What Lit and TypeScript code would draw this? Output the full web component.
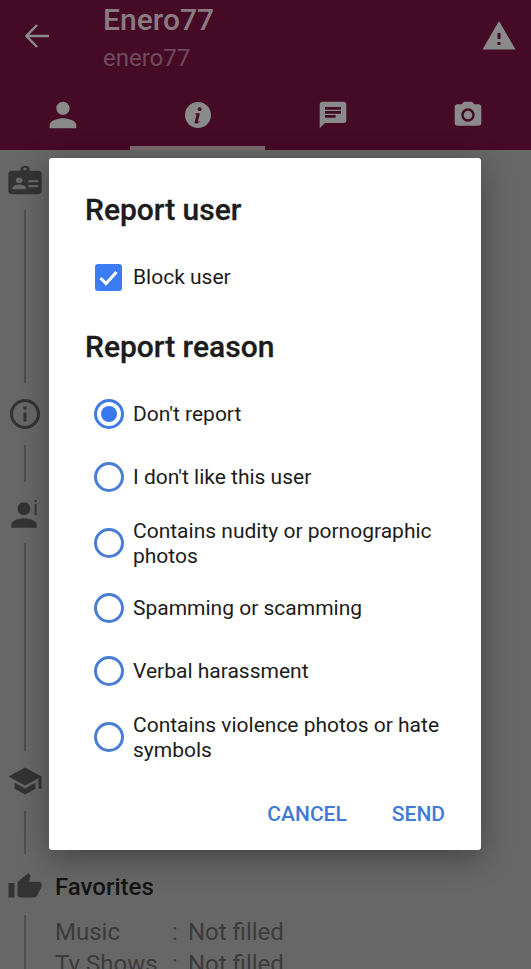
import { LitElement, html, css, svg } from "lit";
import { customElement } from "lit/decorators.js";
import { styleMap } from "lit/directives/style-map.js";

const P = {
  person: "M12 12c2.21 0 4-1.79 4-4s-1.79-4-4-4-4 1.79-4 4 1.79 4 4 4zm0 2c-2.67 0-8 1.34-8 4v2h16v-2c0-2.66-5.33-4-8-4z",
  chat: "M20 2H4c-1.1 0-1.99.9-1.99 2L2 22l4-4h14c1.1 0 2-.9 2-2V4c0-1.1-.9-2-2-2zM6 9h12v2H6V9zm8 5H6v-2h8v2zm4-6H6V6h12v2z",
  camera: "M9 2L7.17 4H4c-1.1 0-2 .9-2 2v12c0 1.1.9 2 2 2h16c1.1 0 2-.9 2-2V6c0-1.1-.9-2-2-2h-3.17L15 2H9zm3 15c-2.76 0-5-2.24-5-5s2.24-5 5-5 5 2.24 5 5-2.24 5-5 5zm0-8.200a3.200 3.200 0 1 0 0 6.400 3.200 3.200 0 0 0 0-6.400z",
  warning: "M1 21h22L12 2 1 21zm12-3h-2v-2h2v2zm0-4h-2v-4h2v4z",
  info: "M11 7h2v2h-2zm0 4h2v6h-2zm1-9C6.48 2 2 6.48 2 12s4.48 10 10 10 10-4.48 10-10S17.52 2 12 2zm0 18c-4.41 0-8-3.59-8-8s3.59-8 8-8 8 3.59 8 8-3.59 8-8 8z",
  school: "M5 13.18v4L12 21l7-3.82v-4L12 17l-7-3.82zM12 3L1 9l11 6 9-4.91V17h2V9L12 3z",
  thumb: "M1 21h4V9H1v12zm22-11c0-1.1-.9-2-2-2h-6.31l.95-4.57.03-.32c0-.41-.17-.79-.44-1.06L14.17 1 7.59 7.59C7.22 7.95 7 8.45 7 9v10c0 1.1.9 2 2 2h9c.83 0 1.54-.5 1.84-1.22l3.02-7.05c.09-.23.14-.47.14-.73v-2z",
  badge: "M4 5.500h5.200V4.200C9.200 3 10.400 2 12 2s2.800 1 2.800 2.200v1.300H20c1.100 0 2 .9 2 2V20c0 1.100-.9 2-2 2H4c-1.100 0-2-.9-2-2V7.500c0-1.100.9-2 2-2zM12 3.300a1 1 0 1 0 0 2 1 1 0 0 0 0-2zM8.500 10.200a2 2 0 1 0 0 4 2 2 0 0 0 0-4zM4.500 18.500h8v-1c0-1.500-2.700-2.300-4-2.300s-4 .8-4 2.300v1zM14 12v1.600h6V12h-6zM14 15.600v1.600h6v-1.600h-6z",
};

const icon = (d: string) => html`<svg viewBox="0 0 24 24" preserveAspectRatio="none" fill="currentColor"><path d=${d} fill-rule="evenodd"></path></svg>`;

const infoItalic = html`<svg viewBox="0 0 26 26">
  ${svg`<circle cx="13" cy="13" r="13" fill="#8a8a8a"></circle>
  <circle cx="14.600" cy="7.200" r="1.900" fill="#450a24"></circle>
  <path d="M10.600 11.200h4.300l-2.100 8.200c-.1.500.3.600 1.600-.5l.4.500c-1.500 1.700-2.900 2.200-4 2.100-1-.1-1.200-.8-1-1.700l1.700-6.800c.1-.5-.4-.6-1.100-.5z" fill="#450a24"></path>`}
</svg>`;

const rail = [
  { k: "badge", w: 40, h: 34, before: 13, line: 173, lineTop: 13 },
  { k: "info", w: 36, h: 36, before: 13, line: 37, lineTop: 13 },
  { k: "person", w: 38, h: 38, before: 14, line: 208, lineTop: 9 },
  { k: "school", w: 36, h: 36, before: 12, line: 43, lineTop: 12 },
  { k: "thumb", w: 36, h: 29, before: 18, line: 60, lineTop: 14 },
];

const reasons = [
  { t: "Don't report", on: true },
  { t: "I don't like this user" },
  { t: "Contains nudity or pornographic photos", two: true },
  { t: "Spamming or scamming" },
  { t: "Verbal harassment" },
  { t: "Contains violence photos or hate symbols", two: true },
];

@customElement("app-root")
export class AppRoot extends LitElement {
  static styles = css`
    :host {
      display: block;
      position: relative;
      width: 531px;
      height: 969px;
      overflow: hidden;
      background: #676767;
      font-family: Roboto, "Liberation Sans", sans-serif;
      color: #1c1c1c;
    }
    svg { display: block; width: 100%; height: 100%; }

    header { height: 150px; background: #450a24; display: flex; flex-direction: column; }
    .bar { height: 95px; display: flex; align-items: flex-start; }
    .back { width: 24px; height: 24px; margin: 24px 0 0 25px; color: #8a8a8a; flex: none; }
    .titles { margin-left: 54px; flex: 1; padding-top: 3px; }
    .name { font-size: 30px; line-height: 34px; font-weight: 500; color: #8a7a82; }
    .handle { font-size: 24px; line-height: 30px; margin-top: 6px; color: #6f4a5c; }
    .warn { width: 36px; height: 36px; margin: 18px 14px 0 0; color: #8a8a8a; flex: none; }
    .tabs { flex: 1; display: flex; justify-content: center; padding-right: 1px; }
    .tab { flex: 0 0 135px; display: flex; align-items: flex-start; justify-content: center; box-sizing: border-box; border-bottom: 4px solid transparent; color: #8a8a8a; }
    .tab.active { border-bottom-color: #7a6a70; }
    .i40 { width: 40px; height: 40px; }
    .i26 { width: 26px; height: 26px; margin-top: 7px; }
    .i33 { width: 32px; height: 32px; margin-top: 4px; }

    .main { display: flex; }
    .rail { width: 50px; flex: none; display: flex; flex-direction: column; align-items: center; color: #333; }
    .rail .ic { flex: none; }
    .line { width: 2px; background: #4e4e4e; flex: none; }
    .person { position: relative; left: -1px; }
    .person small { position: absolute; left: 28px; top: 1px; font-size: 21px; line-height: 22px; color: #3a3a3a; }

    .content { flex: 1; padding: 722px 0 0 5px; }
    .fav { font-size: 24px; line-height: 30px; font-weight: 500; color: #141414; }
    .kv { display: grid; grid-template-columns: 117px 16px 1fr; font-size: 24px; line-height: 32px; color: #3b3b3b; margin-top: 14px; }

    .dialog {
      position: absolute;
      left: 49px; top: 158px; width: 432px; height: 692px;
      box-sizing: border-box;
      background: #fff;
      border-radius: 3px;
      box-shadow: 0 8px 30px rgba(0, 0, 0, .35);
      display: flex; flex-direction: column;
      padding: 35px 36px 0;
    }
    h2 { margin: 0; font-size: 30px; line-height: 34px; font-weight: 500; color: #1c1c1c; -webkit-text-stroke: 0.3px #1c1c1c; }
    .check-row { display: flex; align-items: center; gap: 11px; margin: 34px 0 0 10px; height: 32px; font-size: 21px; }
    .box { width: 27px; height: 27px; flex: none; }
    h2.second { margin-top: 37px; }
    .list { display: flex; flex-direction: column; gap: 1px; margin-top: 19px; }
    .row { display: flex; align-items: center; gap: 9px; min-height: 62px; margin-left: 9px; font-size: 21px; line-height: 25px; padding: 8px 0; box-sizing: border-box; }
    .row.two { min-height: 67px; }
    .row.two span { margin: 1px 0 -1px; }
    .radio { width: 30px; height: 30px; flex: none; box-sizing: border-box; border: 3px solid #4a7dd4; border-radius: 50%; display: flex; align-items: center; justify-content: center; }
    .radio.on { border-color: #3f7be6; }
    .radio.on::after { content: ""; width: 16px; height: 16px; border-radius: 50%; background: #3a78ee; }
    .actions { display: flex; justify-content: flex-end; gap: 45px; margin-top: 29px; font-size: 21px; line-height: 30px; font-weight: 500; color: #3f7bd6; }
  `;

  render() {
    return html`
      <header>
        <div class="bar">
          <div class="back"><svg viewBox="0 0 24 24" fill="none" stroke="currentColor" stroke-width="2.400"><path d="M24 12H1.500M12 1L1.500 12 12 23"></path></svg></div>
          <div class="titles">
            <div class="name">Enero77</div>
            <div class="handle">enero77</div>
          </div>
          <div class="warn">${icon(P.warning)}</div>
        </div>
        <nav class="tabs">
          <div class="tab"><div class="ic i40">${icon(P.person)}</div></div>
          <div class="tab active"><div class="ic i26">${infoItalic}</div></div>
          <div class="tab"><div class="ic i33">${icon(P.chat)}</div></div>
          <div class="tab"><div class="ic i33">${icon(P.camera)}</div></div>
        </nav>
      </header>

      <div class="main">
        <div class="rail">
          ${rail.map((r) => html`
            <div class="ic ${r.k === "person" ? "person" : ""}" style=${styleMap({ width: r.w + "px", height: r.h + "px", marginTop: r.before + "px" })}>
              ${icon((P as any)[r.k])}${r.k === "person" ? html`<small>i</small>` : ""}
            </div>
            <div class="line" style=${styleMap({ height: r.line + "px", marginTop: r.lineTop + "px" })}></div>
          `)}
        </div>
        <div class="content">
          <div class="fav">Favorites</div>
          <div class="kv">
            <span>Music</span><span>:</span><span>Not filled</span>
            <span>Tv Shows</span><span>:</span><span>Not filled</span>
          </div>
        </div>
      </div>

      <div class="dialog" role="dialog">
        <h2>Report user</h2>
        <div class="check-row">
          <div class="box"><svg viewBox="0 0 27 27"><rect width="27" height="27" rx="3" fill="#3b7cf2"></rect><path d="M5.500 14l5.500 5.500L21.500 8" fill="none" stroke="#fff" stroke-width="3"></path></svg></div>
          <span>Block user</span>
        </div>
        <h2 class="second">Report reason</h2>
        <div class="list">
          ${reasons.map((r) => html`<div class="row ${r.two ? "two" : ""}"><div class="radio ${r.on ? "on" : ""}"></div><span>${r.t}</span></div>`)}
        </div>
        <div class="actions"><span>CANCEL</span><span>SEND</span></div>
      </div>
    `;
  }
}
